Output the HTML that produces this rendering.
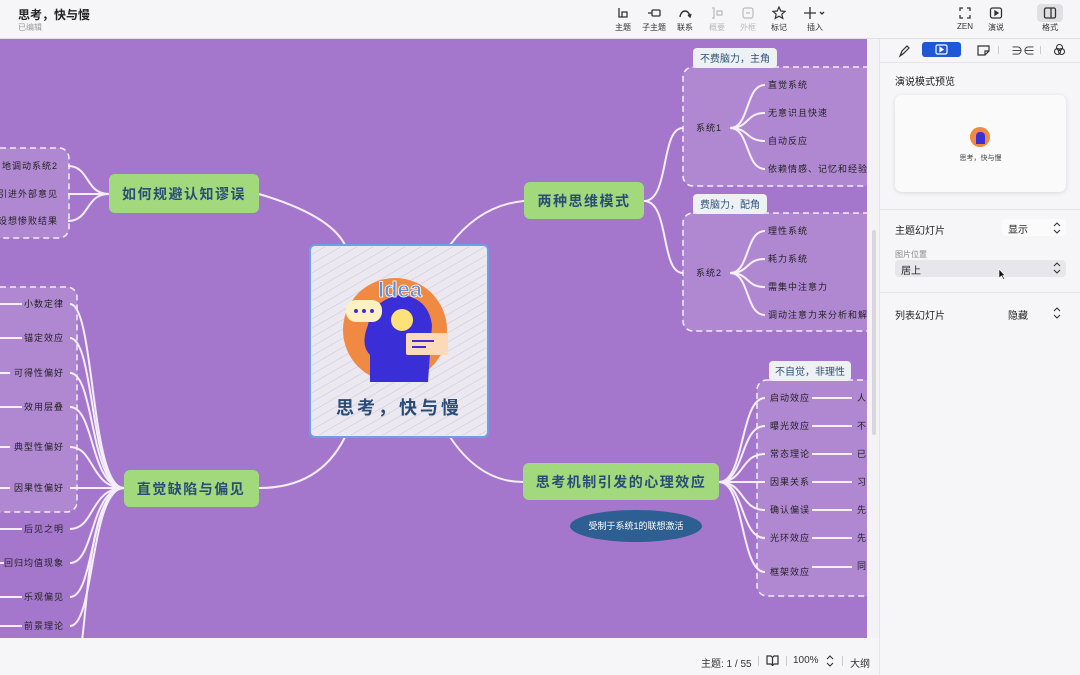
<!DOCTYPE html>
<html><head><meta charset="utf-8"><style>
*{margin:0;padding:0;box-sizing:border-box}
body{width:1080px;height:675px;overflow:hidden;background:#f6f5f7;font-family:"Liberation Sans","Noto Sans CJK SC",sans-serif;position:relative;color:#222}
.top{position:absolute;left:0;top:0;width:1080px;height:39px;background:#f6f5f7;border-bottom:1px solid #e2e0e4}
.t1{position:absolute;left:18px;top:6px;font-size:12px;font-weight:600;color:#222}
.t2{position:absolute;left:18px;top:22px;font-size:8px;color:#999}
.tb{position:absolute;top:6px;text-align:center;font-size:8px;color:#333;width:30px}
.tb svg{display:block;margin:0 auto 2px}
.tb.dis{color:#bbb}
.canvas{position:absolute;left:0;top:39px;width:867px;height:599px;background:#a577cc;overflow:hidden}
.side{position:absolute;left:879px;top:39px;width:201px;height:636px;background:#f6f5f7;border-left:1px solid #e6e4e8}
.status{position:absolute;left:0;top:638px;width:879px;height:37px;background:#f6f5f7;font-size:10px;color:#333}
</style></head><body>
<div class="top">
<div class="t1">思考，快与慢</div><div class="t2">已编辑</div>
<div class="tb" style="left:608px"><svg width="14" height="14" viewBox="0 0 14 14" fill="none" stroke="#333" stroke-width="1.3"><path d="M3 2v9h3M6 6h5v5H6z"/></svg>主题</div>
<div class="tb" style="left:639px"><svg width="14" height="14" viewBox="0 0 14 14" fill="none" stroke="#333" stroke-width="1.3"><path d="M1 7h4"/><rect x="5" y="4" width="8" height="6" rx="1"/></svg>子主题</div>
<div class="tb" style="left:670px"><svg width="14" height="14" viewBox="0 0 14 14" fill="none" stroke="#333" stroke-width="1.4"><path d="M2 11C3 3 11 3 12 11M10 9l2 2 1-3"/></svg>联系</div>
<div class="tb dis" style="left:702px"><svg width="14" height="14" viewBox="0 0 14 14" fill="none" stroke="#bbb" stroke-width="1.2"><path d="M2 2h2v10H2M7 5h5v4H7z"/></svg>概要</div>
<div class="tb dis" style="left:733px"><svg width="14" height="14" viewBox="0 0 14 14" fill="none" stroke="#bbb" stroke-width="1.2"><rect x="2" y="2" width="10" height="10" rx="2"/><path d="M5 7h4"/></svg>外框</div>
<div class="tb" style="left:764px"><svg width="14" height="14" viewBox="0 0 14 14" fill="none" stroke="#333" stroke-width="1.2"><path d="M7 1l1.8 4 4.2.4-3.2 2.8 1 4.2L7 10.2 3.2 12.4l1-4.2L1 5.4 5.2 5z"/></svg>标记</div>
<div class="tb" style="left:800px"><svg width="24" height="14" viewBox="0 0 24 14" fill="none" stroke="#333" stroke-width="1.3"><path d="M7 1v12M1 7h12M17 6l2 2 2-2"/></svg>插入</div>
<div class="tb" style="left:950px"><svg width="14" height="14" viewBox="0 0 14 14" fill="none" stroke="#333" stroke-width="1.3"><path d="M2 5V2h3M9 2h3v3M12 9v3H9M5 12H2V9"/></svg>ZEN</div>
<div class="tb" style="left:981px"><svg width="14" height="14" viewBox="0 0 14 14" fill="none" stroke="#333" stroke-width="1.3"><rect x="1.5" y="2" width="11" height="10" rx="2"/><path d="M6 5l3 2-3 2z" fill="#333"/></svg>演说</div>
<div style="position:absolute;left:1037px;top:4px;width:26px;height:18px;background:#e0dfe3;border-radius:4px"></div>
<div class="tb" style="left:1035px"><svg width="14" height="14" viewBox="0 0 14 14" fill="none" stroke="#333" stroke-width="1.3"><rect x="1.5" y="2" width="11" height="10" rx="1.5"/><path d="M8 2v10"/></svg>格式</div>
</div>

<div class="canvas">
<svg width="867" height="599" viewBox="0 39 867 599" style="font-family:'Liberation Sans','Noto Sans CJK SC',sans-serif">
<defs>
<pattern id="hatch" width="8" height="8" patternUnits="userSpaceOnUse" patternTransform="rotate(60)"><line x1="0" y1="0" x2="0" y2="8" stroke="#b9a8d8" stroke-width="1"/></pattern></defs>
<g fill="none" stroke="#f4eefa" stroke-width="2">
<path d="M345 245 Q330 215 259 194"/><path d="M450 245 Q480 205 524 201"/><path d="M345 437 Q320 488 259 488"/><path d="M450 437 Q480 482 523 482"/>
<path d="M644 201 C670 201 660 128 683 128"/><path d="M644 201 C670 201 660 273 683 273"/>
<path d="M730 128 C750 128 745 85 765 85"/><path d="M730 128 C750 128 745 113 765 113"/><path d="M730 128 C750 128 745 141 765 141"/><path d="M730 128 C750 128 745 169 765 169"/>
<path d="M730 273 C750 273 745 231 765 231"/><path d="M730 273 C750 273 745 259 765 259"/><path d="M730 273 C750 273 745 287 765 287"/><path d="M730 273 C750 273 745 315 765 315"/>
<path d="M719 482 C745 482 740 398 765 398"/><path d="M719 482 C745 482 740 426 765 426"/><path d="M719 482 C745 482 740 454 765 454"/><path d="M719 482 L765 482"/><path d="M719 482 C745 482 740 510 765 510"/><path d="M719 482 C745 482 740 538 765 538"/><path d="M719 482 C745 482 740 572 765 572"/>
<path d="M812 398h40M812 426h40M812 454h40M812 482h40M812 510h40M812 538h40M812 567h40"/>
<path d="M109 194 C85 194 90 166 68 166"/><path d="M109 194 L68 194"/><path d="M109 194 C85 194 90 221 68 221"/>
<path d="M124 488 C90 488 95 304 70 304"/><path d="M124 488 C90 488 95 338 70 338"/><path d="M124 488 C90 488 95 373 70 373"/><path d="M124 488 C90 488 95 407 70 407"/><path d="M124 488 C90 488 95 447 70 447"/><path d="M124 488 L70 488"/><path d="M124 488 C90 488 95 529 70 529"/><path d="M124 488 C90 488 95 563 70 563"/><path d="M124 488 C90 488 95 597 70 597"/><path d="M124 488 C90 488 95 626 70 626"/><path d="M124 488 C90 488 88 600 82 640"/>
<path d="M0 304h22M0 338h22M0 373h10M0 407h22M0 447h10M0 488h10M0 529h22M0 563h4M0 597h22M0 626h22"/>
</g>
<g fill="rgba(255,255,255,0.13)" stroke="#f4eefa" stroke-width="1.5" stroke-dasharray="6 4">
<rect x="683" y="67" width="200" height="119" rx="10"/>
<rect x="683" y="213" width="200" height="118" rx="10"/>
<rect x="757" y="380" width="130" height="216" rx="10"/>
<rect x="-20" y="148" width="89" height="90" rx="10"/>
<rect x="-20" y="287" width="97" height="225" rx="10"/>
</g>
<g fill="#eef1f4"><rect x="693" y="48" width="84" height="20" rx="4"/><rect x="693" y="194" width="74" height="20" rx="4"/><rect x="769" y="361" width="82" height="20" rx="4"/></g>
<g font-size="10" fill="#2d4f77" text-anchor="middle"><text x="735" y="62">不费脑力，主角</text><text x="730" y="208">费脑力，配角</text><text x="810" y="375">不自觉，非理性</text></g>
<g fill="#a3d97d"><rect x="524" y="182" width="120" height="37" rx="6"/><rect x="109" y="174" width="150" height="39" rx="6"/><rect x="124" y="470" width="135" height="37" rx="6"/><rect x="523" y="463" width="196" height="37" rx="6"/></g>
<g font-size="14" fill="#2a4d78" text-anchor="middle" font-weight="bold" letter-spacing="1.5"><text x="584" y="206">两种思维模式</text><text x="184" y="199">如何规避认知谬误</text><text x="191" y="494">直觉缺陷与偏见</text><text x="621" y="487">思考机制引发的心理效应</text></g>
<ellipse cx="636" cy="526" rx="66" ry="16" fill="#2e5f92"/>
<text x="636" y="529" font-size="9" fill="#fff" text-anchor="middle">受制于系统1的联想激活</text>
<rect x="310" y="245" width="178" height="192" rx="5" fill="#ebe8ef" stroke="#6aa0e6" stroke-width="2"/>
<rect x="312" y="247" width="174" height="188" fill="url(#hatch)" opacity="0.6"/>
<circle cx="395" cy="330" r="52" fill="#f08a43"/>
<path d="M370 382 L370 355 Q360 345 368 325 Q372 300 400 295 Q428 297 432 325 L428 382z" fill="#3a2fd6"/>
<circle cx="402" cy="320" r="11" fill="#fde27a"/>
<rect x="346" y="300" width="36" height="22" rx="10" fill="#fdf0c4"/>
<g fill="#3a2fd6"><circle cx="356" cy="311" r="2"/><circle cx="364" cy="311" r="2"/><circle cx="372" cy="311" r="2"/></g>
<rect x="406" y="333" width="42" height="22" rx="2" fill="#fcd9b8"/>
<path d="M412 341h22M412 347h14" stroke="#3a2fd6" stroke-width="2"/>
<text x="400" y="297" font-size="22" font-weight="bold" fill="#5b8ee8" stroke="#fff" stroke-width="0.8" text-anchor="middle">Idea</text>
<text x="399" y="414" font-size="18" font-weight="bold" fill="#2a4d78" text-anchor="middle" letter-spacing="3">思考，快与慢</text>
<g font-size="9" fill="#222" letter-spacing="1">
<text x="696" y="131">系统1</text><text x="696" y="276">系统2</text>
<text x="768" y="88">直觉系统</text><text x="768" y="116">无意识且快速</text><text x="768" y="144">自动反应</text><text x="768" y="172">依赖情感、记忆和经验</text>
<text x="768" y="234">理性系统</text><text x="768" y="262">耗力系统</text><text x="768" y="290">需集中注意力</text><text x="768" y="318">调动注意力来分析和解决</text>
<text x="770" y="401">启动效应</text><text x="770" y="429">曝光效应</text><text x="770" y="457">常态理论</text><text x="770" y="485">因果关系</text><text x="770" y="513">确认偏误</text><text x="770" y="541">光环效应</text><text x="770" y="575">框架效应</text>
<text x="857" y="401">人</text><text x="857" y="429">不</text><text x="857" y="457">已</text><text x="857" y="485">习</text><text x="857" y="513">先</text><text x="857" y="541">先</text><text x="857" y="569">同</text>
</g>
<g font-size="9" fill="#222" letter-spacing="1" text-anchor="end">
<text x="58" y="169">地调动系统2</text><text x="58" y="197">引进外部意见</text><text x="58" y="224">设想惨败结果</text>
<text x="64" y="307">小数定律</text><text x="64" y="341">锚定效应</text><text x="64" y="376">可得性偏好</text><text x="64" y="410">效用层叠</text><text x="64" y="450">典型性偏好</text><text x="64" y="491">因果性偏好</text>
<text x="64" y="532">后见之明</text><text x="64" y="566">回归均值现象</text><text x="64" y="600">乐观偏见</text><text x="64" y="629">前景理论</text>
</g>
</svg>
<div style="position:absolute;left:312px;top:604px;width:178px;height:4px;border-radius:2px;background:#c6bcd2"></div>
</div>
<div style="position:absolute;left:867px;top:39px;width:12px;height:599px;background:#f3f2f5"></div>
<div style="position:absolute;left:872px;top:230px;width:4px;height:205px;background:#d8d6dc;border-radius:2px"></div>

<div class="side">
<div style="position:absolute;left:0;top:0;width:201px;height:24px;border-bottom:1px solid #e6e4e8"></div>
<svg style="position:absolute;left:17px;top:5px" width="14" height="14" viewBox="0 0 14 14" fill="none" stroke="#333" stroke-width="1.2"><path d="M3 12l2-5 5-5 2 2-5 5zM3 12l3-2"/></svg>
<div style="position:absolute;left:42px;top:3px;width:39px;height:15px;background:#1f57d6;border-radius:3px"></div>
<svg style="position:absolute;left:55px;top:5px" width="13" height="11" viewBox="0 0 13 11" fill="none" stroke="#fff" stroke-width="1.2"><rect x="1" y="1" width="11" height="9" rx="1.5"/><path d="M5 3.5l3 2-3 2z" fill="#fff"/></svg>
<svg style="position:absolute;left:97px;top:5px" width="13" height="12" viewBox="0 0 13 12" fill="none" stroke="#333" stroke-width="1.2"><path d="M1 2h11v5l-4 4H1zM8 11V7h4"/></svg>
<div style="position:absolute;left:118px;top:7px;width:1px;height:8px;background:#ccc"></div>
<div style="position:absolute;left:131px;top:3px;font-size:12px;color:#333">∋∈</div>
<div style="position:absolute;left:160px;top:7px;width:1px;height:8px;background:#ccc"></div>
<svg style="position:absolute;left:173px;top:4px" width="13" height="13" viewBox="0 0 13 13" fill="none" stroke="#333" stroke-width="1.1"><circle cx="6.5" cy="4.5" r="3"/><circle cx="4.5" cy="8.5" r="3"/><circle cx="8.5" cy="8.5" r="3"/></svg>
<div style="position:absolute;left:15px;top:34px;font-size:10px;color:#222">演说模式预览</div>
<div style="position:absolute;left:15px;top:56px;width:171px;height:97px;background:#fafafb;border-radius:7px;box-shadow:0 1px 5px rgba(0,0,0,0.12)"></div>
<div style="position:absolute;left:90px;top:88px;width:20px;height:20px;border-radius:50%;background:#f08a43"><div style="position:absolute;left:6px;top:5px;width:9px;height:12px;background:#3a2fd6;border-radius:4px 4px 0 0"></div></div>
<div style="position:absolute;left:0;top:114px;width:201px;text-align:center;font-size:7px;color:#444">思考，快与慢</div>
<div style="position:absolute;left:0;top:170px;width:201px;height:1px;background:#e6e4e8"></div>
<div style="position:absolute;left:15px;top:183px;font-size:10px;color:#222">主题幻灯片</div>
<div style="position:absolute;left:122px;top:180px;width:64px;height:17px;background:#fbfbfc;border-radius:4px;font-size:10px;padding:2px 0 0 6px">显示</div>
<div style="position:absolute;left:15px;top:210px;font-size:8px;color:#888">图片位置</div>
<div style="position:absolute;left:15px;top:221px;width:171px;height:17px;background:#e7e6ea;border-radius:4px;font-size:10px;padding:2px 0 0 6px;color:#222">居上</div>
<svg style="position:absolute;left:173px;top:223px" width="8" height="12" viewBox="0 0 8 12" fill="none" stroke="#333" stroke-width="1.1"><path d="M1 4l3-3 3 3M1 8l3 3 3-3"/></svg>
<svg style="position:absolute;left:173px;top:183px" width="8" height="12" viewBox="0 0 8 12" fill="none" stroke="#333" stroke-width="1.1"><path d="M1 4l3-3 3 3M1 8l3 3 3-3"/></svg>
<svg style="position:absolute;left:173px;top:268px" width="8" height="12" viewBox="0 0 8 12" fill="none" stroke="#333" stroke-width="1.1"><path d="M1 4l3-3 3 3M1 8l3 3 3-3"/></svg>
<svg style="position:absolute;left:118px;top:229px" width="8" height="12" viewBox="0 0 8 12"><path d="M1 1v9l2.5-2 2 3.5 1.2-.6-2-3.4H7z" fill="#111" stroke="#fff" stroke-width=".6"/></svg>
<div style="position:absolute;left:0;top:253px;width:201px;height:1px;background:#e6e4e8"></div>
<div style="position:absolute;left:15px;top:268px;font-size:10px;color:#222">列表幻灯片</div>
<div style="position:absolute;left:128px;top:268px;font-size:10px;color:#222">隐藏</div>
</div>
<div class="status">
<div style="position:absolute;left:701px;top:17px">主题: 1 / 55</div>
<div style="position:absolute;left:758px;top:18px;width:1px;height:10px;background:#ccc"></div>
<svg style="position:absolute;left:766px;top:17px" width="13" height="11" viewBox="0 0 13 11" fill="none" stroke="#333" stroke-width="1.2"><path d="M1 1h4l1.5 1.5L8 1h4v8H8l-1.5 1.5L5 9H1zM6.5 2.5v8"/></svg>
<div style="position:absolute;left:786px;top:18px;width:1px;height:10px;background:#ccc"></div>
<div style="position:absolute;left:793px;top:17px">100%</div>
<svg style="position:absolute;left:826px;top:17px" width="8" height="12" viewBox="0 0 8 12" fill="none" stroke="#333" stroke-width="1.1"><path d="M1 4l3-3 3 3M1 8l3 3 3-3"/></svg>
<div style="position:absolute;left:842px;top:18px;width:1px;height:10px;background:#ccc"></div>
<div style="position:absolute;left:850px;top:17px">大纲</div>
</div>
</body></html>
